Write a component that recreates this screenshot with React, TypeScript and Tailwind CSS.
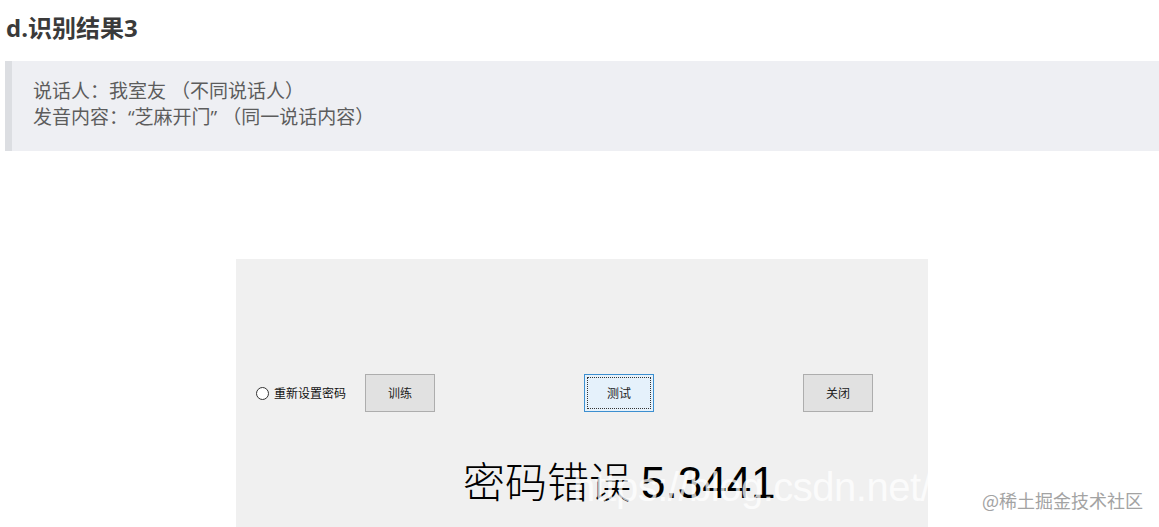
const cjk = "font-['Open_Sans','Noto_Sans_CJK_SC',sans-serif]";

function WinButton({ label, focused }: { label: string; focused?: boolean }) {
  return (
    <div
      className={
        focused
          ? "flex h-[38px] w-[70px] items-center justify-center border border-[#3c8fd0] bg-[#e5f1fb] p-[2px]"
          : "flex h-[38px] w-[70px] items-center justify-center border border-[#adadad] bg-[#e1e1e1]"
      }
    >
      <div
        className={
          focused
            ? "flex h-full w-full items-center justify-center border border-dotted border-[#333]"
            : "flex h-full w-full items-center justify-center"
        }
      >
        <span className="font-['Noto_Sans_CJK_SC',sans-serif] text-[12px] text-[#222]">{label}</span>
      </div>
    </div>
  );
}

export default function App() {
  return (
    <div className={`relative h-[527px] w-[1159px] overflow-hidden bg-white ${cjk}`}>
      <h4 className="pl-[6px] pt-[12px] text-[24px] font-bold leading-[32px] text-[#3a3a3a]">d.识别结果3</h4>

      <blockquote className="ml-[5px] mt-[17px] h-[90px] border-l-[7px] border-[#dcdee2] bg-[#eeeff3] pl-[21px] pt-[17px] text-[19px] leading-[26px] text-[#5c5c5c]">
        <p>说话人：我室友 （不同说话人）</p>
        <p>发音内容：“芝麻开门”&nbsp;（同一说话内容）</p>
      </blockquote>

      <div className="ml-[5px] mt-[108px] flex justify-center">
        <div className="relative h-[300px] w-[692px] overflow-hidden bg-[#f0f0f0]">
          <div className="mt-[115px] flex items-center">
            <div className="ml-[20px] flex items-center">
              <span className="h-[13px] w-[13px] rounded-full border border-[#333] bg-white" />
              <span className="ml-[5px] font-['Noto_Sans_CJK_SC',sans-serif] text-[12px] text-[#111]">重新设置密码</span>
            </div>
            <div className="ml-[19px]">
              <WinButton label="训练" />
            </div>
            <div className="ml-[149px]">
              <WinButton label="测试" focused />
            </div>
            <div className="ml-[149px]">
              <WinButton label="关闭" />
            </div>
          </div>

          <div className="ml-[227px] mt-[40px] flex items-baseline whitespace-nowrap leading-[56px] text-black">
            <span className="font-['Noto_Sans_CJK_SC',sans-serif] text-[42px] font-light">密码错误</span>
            <span className="ml-[10px] font-['Liberation_Sans',sans-serif] text-[44px]">5.3441</span>
          </div>

          {/* watermark */}
          <div className="absolute left-[337px] top-[204px] whitespace-nowrap font-['Liberation_Sans',sans-serif] text-[40px] leading-[48px] tracking-[-0.5px] text-white/75">
            https://blog.csdn.net/
          </div>
        </div>
      </div>

      <div className="absolute left-[982px] top-[488px] font-['Noto_Sans_CJK_SC',sans-serif] text-[18px] leading-[24px] text-[#a3a3a3]">
        @稀土掘金技术社区
      </div>
    </div>
  );
}
